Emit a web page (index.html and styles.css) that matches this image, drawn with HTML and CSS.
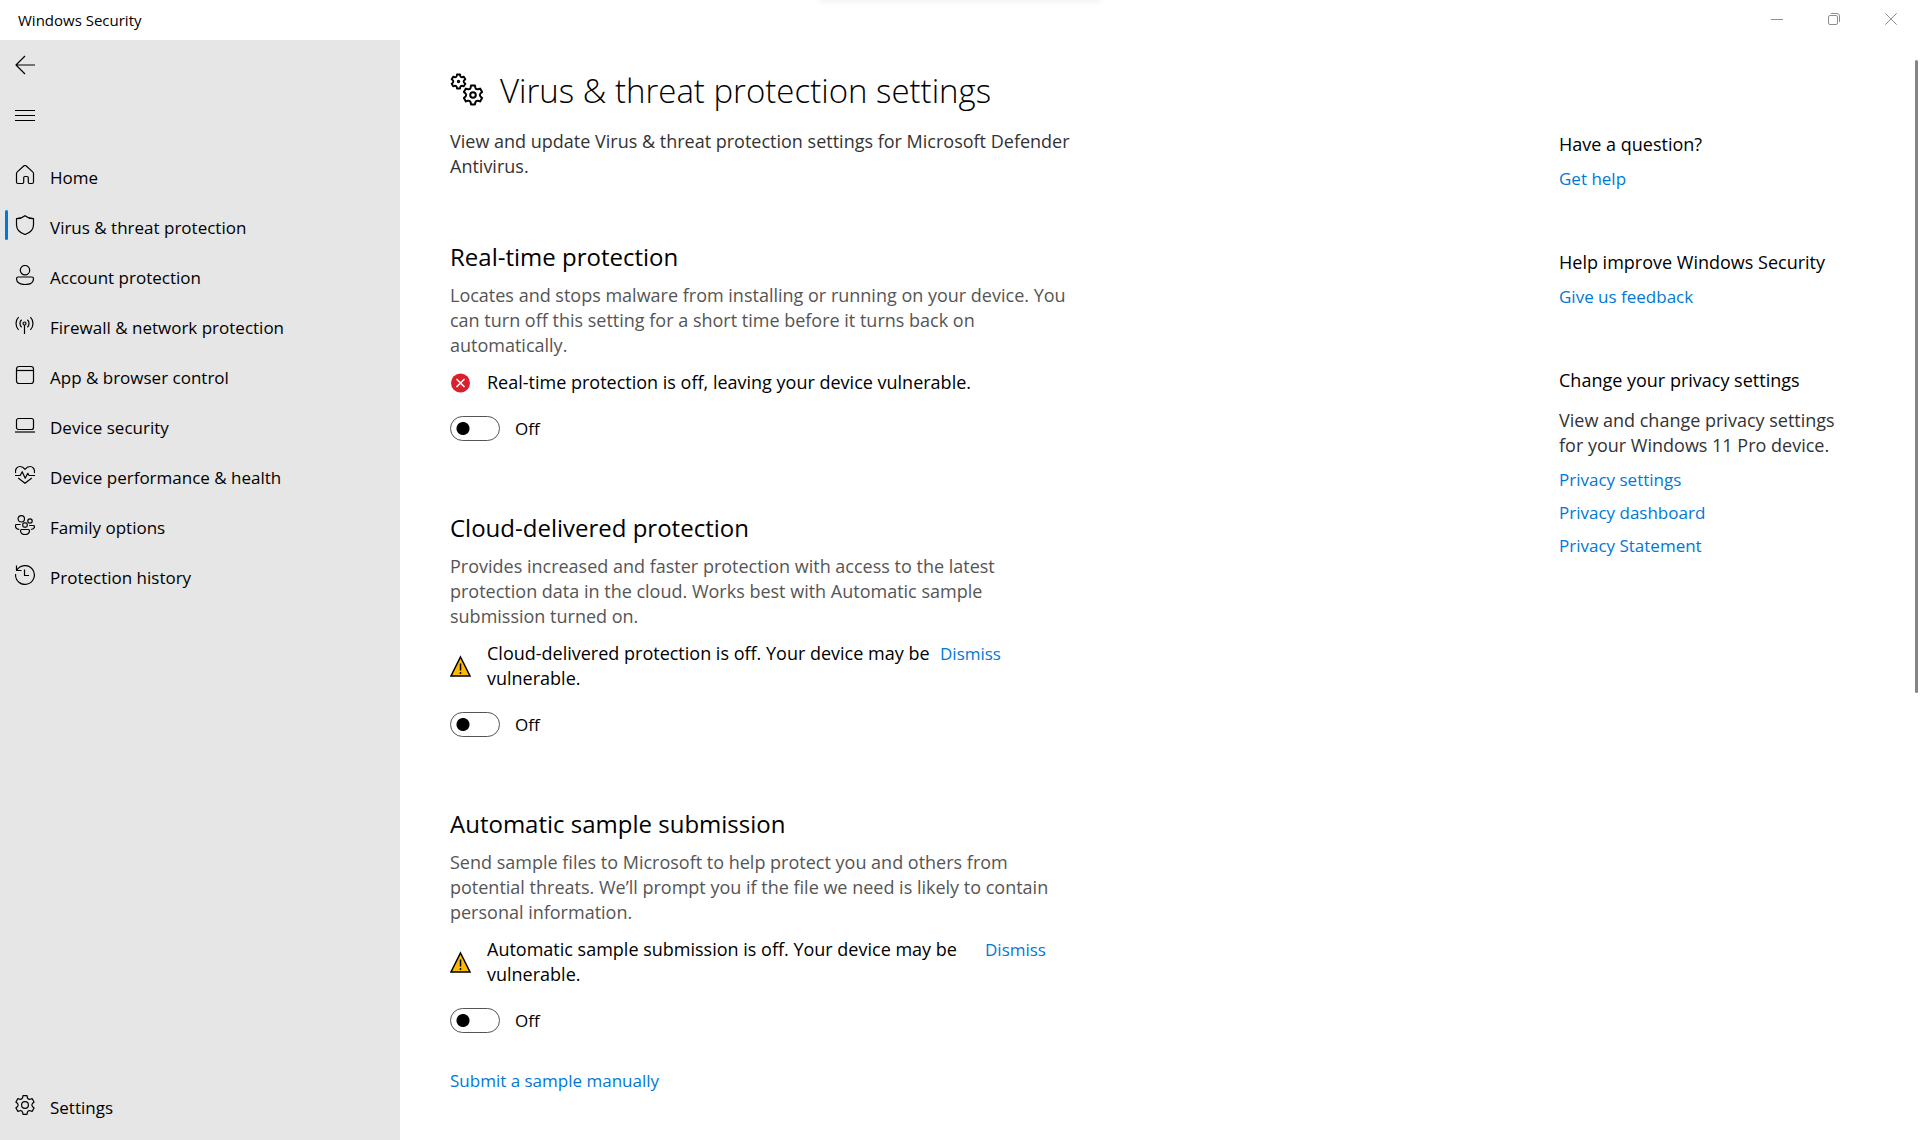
FILE: index.html
```html
<!DOCTYPE html>
<html lang="en">
<head>
    <meta charset="UTF-8">
    <meta name="viewport" content="width=device-width, initial-scale=1.0">
    <title>Windows Security</title>
    <link rel="stylesheet" href="styles.css">
</head>
<body>
    <header class="titlebar">
        <span class="app-name">Windows Security</span>
        <div class="window-buttons">
            <button type="button" aria-label="Minimize">
                <svg width="12" height="12" viewBox="0 0 12 12"><path d="M0 6.5h12"/></svg>
            </button>
            <button type="button" aria-label="Restore">
                <svg width="12" height="12" viewBox="0 0 12 12"><rect x=".5" y="2.5" width="9" height="9" rx="1.5"/><path d="M3 .5h6a2.500 2.500 0 0 1 2.500 2.500v6"/></svg>
            </button>
            <button type="button" aria-label="Close">
                <svg width="12" height="12" viewBox="0 0 12 12"><path d="M.3.3l11.400 11.400M11.700.3L.3 11.700"/></svg>
            </button>
        </div>
    </header>

    <div class="layout">
        <aside class="sidebar">
            <button type="button" class="icon-button" aria-label="Back">
                <svg class="icon" viewBox="0 0 20 20"><path d="M20 10H.8M10 1L1 10l9 9"/></svg>
            </button>
            <button type="button" class="icon-button" aria-label="Menu">
                <svg class="icon" viewBox="0 0 20 20"><path d="M0 5.500h20M0 10.500h20M0 15.500h20"/></svg>
            </button>

            <nav class="nav">
                <a href="#" class="nav-item">
                    <svg class="icon" viewBox="0 0 20 20"><path d="M1.500 8.500c0-.7.3-1.200.8-1.600l6.400-5.900a2 2 0 0 1 2.600 0l6.400 5.900c.5.400.8.900.8 1.600v8.500a1.500 1.500 0 0 1-1.500 1.500h-2.500a1.200 1.200 0 0 1-1.200-1.200v-4.600a1.200 1.200 0 0 0-1.200-1.200h-2.200a1.200 1.200 0 0 0-1.200 1.200v4.600a1.200 1.200 0 0 1-1.200 1.200H3a1.500 1.500 0 0 1-1.500-1.500z"/></svg>
                    <span>Home</span>
                </a>
                <a href="#" class="nav-item active">
                    <svg class="icon" viewBox="0 0 20 20"><path d="M10 .7c2.300 1.900 5 2.900 8.500 3v6c0 4.600-3 8-8.500 9.800-5.500-1.800-8.500-5.200-8.500-9.800v-6c3.500-.1 6.200-1.100 8.500-3z"/></svg>
                    <span>Virus &amp; threat protection</span>
                </a>
                <a href="#" class="nav-item">
                    <svg class="icon" viewBox="0 0 20 20"><circle cx="10" cy="5.200" r="4.700"/><path d="M3.200 12h13.600a1.700 1.700 0 0 1 1.700 1.700c0 3.800-3.600 5.800-8.500 5.800s-8.500-2-8.500-5.800A1.700 1.700 0 0 1 3.200 12z"/></svg>
                    <span>Account protection</span>
                </a>
                <a href="#" class="nav-item">
                    <svg class="icon" viewBox="0 0 20 20"><circle cx="9.500" cy="8.500" r="1.500"/><path d="M9.500 10v9M6.600 4.800a5 5 0 0 0 0 7.400M12.400 4.800a5 5 0 0 1 0 7.400M3.600 2.200a9 9 0 0 0 0 12.600M15.400 2.200a9 9 0 0 1 0 12.600"/></svg>
                    <span>Firewall &amp; network protection</span>
                </a>
                <a href="#" class="nav-item">
                    <svg class="icon" viewBox="0 0 20 20"><rect x="1.500" y="1.500" width="17" height="17" rx="2.500"/><path d="M1.500 5.500h17"/></svg>
                    <span>App &amp; browser control</span>
                </a>
                <a href="#" class="nav-item">
                    <svg class="icon" viewBox="0 0 20 20"><rect x="1.500" y="3.500" width="17" height="11" rx="2"/><path d="M0 17h20"/></svg>
                    <span>Device security</span>
                </a>
                <a href="#" class="nav-item">
                    <svg class="icon" viewBox="0 0 20 20"><path d="M.6 8.200C-.2 3.500 2.600 1.500 5 1.500c2.100 0 3.700 1 5 2.800 1.300-1.800 2.900-2.800 5-2.800 2.400 0 5.200 2 4.400 6.700M0 10.500h5.200l2-3.800 3 6.600 2.600-5 1.300 2.200H20M3.200 13l6.800 5.300 6.800-5.300"/></svg>
                    <span>Device performance &amp; health</span>
                </a>
                <a href="#" class="nav-item">
                    <svg class="icon" viewBox="0 0 20 20"><circle cx="6.300" cy="3.800" r="3.200"/><circle cx="15" cy="6" r="2.200"/><rect x="7.800" y="7.800" width="4.400" height="4.400" rx="1.500"/><path d="M5.600 9.500H1.500c-1 0-1 .5-1 1.500 0 2 1.500 3.200 3.800 3.500M14.200 10.500h4c1 0 1.300.5 1.300 1.200 0 1.500-1.300 2.500-3.500 2.800M6.500 14.500h7a1 1 0 0 1 1 1c0 2.500-2 4-4.500 4s-4.500-1.500-4.500-4a1 1 0 0 1 1-1z"/></svg>
                    <span>Family options</span>
                </a>
                <a href="#" class="nav-item">
                    <svg class="icon" viewBox="0 0 20 20"><path d="M1.500.5v5h5M1.800 5.300A9.400 9.400 0 1 1 .6 9M9.500 4.500v6h4.500"/></svg>
                    <span>Protection history</span>
                </a>
            </nav>

            <a href="#" class="nav-item nav-settings">
                <svg class="icon" viewBox="0 0 20 20"><use href="#gear"/><circle cx="10" cy="10" r="3.400"/></svg>
                <span>Settings</span>
            </a>
        </aside>

        <main class="content">
            <div class="settings">
                <div class="page-header">
                    <svg class="page-icon" width="34" height="34" viewBox="0 0 34 34">
                        <defs>
                            <path id="gear" d="M8 .6h4L12.400 2.800Q13.100 4.600 15 4.300L17.100 3.600l2 3.400L17.400 8.500Q16.200 10 17.400 11.500L19.100 13l-2 3.400L15 15.700Q13.100 15.400 12.400 17.200L12 19.400H8L7.600 17.200Q6.900 15.400 5 15.700L2.900 16.400.9 13 2.600 11.500Q3.800 10 2.600 8.500L.9 7l2-3.400L5 4.300Q6.900 4.600 7.600 2.800z"/>
                        </defs>
                        <svg class="gear-small" x="1" y="1" width="15" height="15" viewBox="0 0 20 20"><use href="#gear"/><circle cx="10" cy="10" r="1"/></svg>
                        <svg class="gear-large" x="13" y="12" width="20" height="20" viewBox="0 0 20 20"><use href="#gear"/><circle cx="10" cy="10" r="2.800"/></svg>
                    </svg>
                    <h1>Virus &amp; threat protection settings</h1>
                </div>
                <p class="intro">View and update Virus &amp; threat protection settings for Microsoft Defender Antivirus.</p>

                <section class="setting">
                    <h2 id="realtime">Real-time protection</h2>
                    <p class="description">Locates and stops malware from installing or running on your device. You can turn off this setting for a short time before it turns back on automatically.</p>
                    <div class="status">
                        <svg class="status-icon" width="21" height="20" viewBox="0 0 21 20"><circle cx="10.500" cy="10" r="9.500" fill="#da1f2d" stroke="none"/><path d="M6.500 6l8 8M14.500 6l-8 8" stroke="#fff" stroke-width="1.600"/></svg>
                        <p>Real-time protection is off, leaving your device vulnerable.</p>
                    </div>
                    <label class="toggle">
                        <input type="checkbox" role="switch" aria-describedby="realtime">
                        <span>Off</span>
                    </label>
                </section>

                <section class="setting">
                    <h2 id="cloud">Cloud-delivered protection</h2>
                    <p class="description">Provides increased and faster protection with access to the latest protection data in the cloud. Works best with Automatic sample submission turned on.</p>
                    <div class="status">
                        <svg class="status-icon" width="21" height="22" viewBox="0 0 21 22"><path d="M10.500 2L20 21H1z" fill="#fdb900" stroke="#000" stroke-width="1.500"/><path d="M10.500 8.500v7M10.500 17v2" stroke="#000" stroke-width="1.500"/></svg>
                        <p class="status-narrow">Cloud-delivered protection is off. Your device may be vulnerable.</p>
                        <a href="#">Dismiss</a>
                    </div>
                    <label class="toggle">
                        <input type="checkbox" role="switch" aria-describedby="cloud">
                        <span>Off</span>
                    </label>
                </section>

                <section class="setting">
                    <h2 id="samples">Automatic sample submission</h2>
                    <p class="description">Send sample files to Microsoft to help protect you and others from potential threats. We’ll prompt you if the file we need is likely to contain personal information.</p>
                    <div class="status">
                        <svg class="status-icon" width="21" height="22" viewBox="0 0 21 22"><path d="M10.500 2L20 21H1z" fill="#fdb900" stroke="#000" stroke-width="1.500"/><path d="M10.500 8.500v7M10.500 17v2" stroke="#000" stroke-width="1.500"/></svg>
                        <p class="status-wide">Automatic sample submission is off. Your device may be vulnerable.</p>
                        <a href="#">Dismiss</a>
                    </div>
                    <label class="toggle">
                        <input type="checkbox" role="switch" aria-describedby="samples">
                        <span>Off</span>
                    </label>
                    <a href="#" class="submit-link">Submit a sample manually</a>
                </section>
            </div>

            <aside class="help">
                <section>
                    <h3>Have a question?</h3>
                    <a href="#">Get help</a>
                </section>
                <section>
                    <h3>Help improve Windows Security</h3>
                    <a href="#">Give us feedback</a>
                </section>
                <section>
                    <h3>Change your privacy settings</h3>
                    <p>View and change privacy settings for your Windows 11 Pro device.</p>
                    <a href="#">Privacy settings</a>
                    <a href="#">Privacy dashboard</a>
                    <a href="#">Privacy Statement</a>
                </section>
            </aside>

            <div class="scroll-thumb"></div>
        </main>
    </div>
</body>
</html>
```

FILE: styles.css
```css
* {
    box-sizing: border-box;
}

body {
    margin: 0;
    min-height: 100vh;
    display: flex;
    flex-direction: column;
    font-family: 'Segoe UI', 'Open Sans', 'Noto Sans', sans-serif;
    font-size: 18px;
    line-height: 25px;
    color: #000;
    background: #fff;
}

h1, h2, h3, p {
    margin: 0;
    font-weight: 400;
}

a {
    font-size: 17px;
    color: #0078d7;
    text-decoration: none;
}

button {
    padding: 0;
    border: 0;
    background: none;
    color: inherit;
}

svg {
    display: block;
    flex-shrink: 0;
    fill: none;
    stroke: currentColor;
}

/* Title bar */
.titlebar {
    position: relative;
    display: flex;
    justify-content: space-between;
    height: 40px;
    padding: 0 1px 0 18px;
    font-size: 15px;
    line-height: 40px;
}

/* soft shadow at the top edge of the window */
.titlebar::after {
    content: '';
    position: absolute;
    top: 0;
    left: 50%;
    width: 280px;
    margin-left: -140px;
    box-shadow: 0 0 5px 1px rgba(0, 0, 0, 0.12);
}

.window-buttons {
    display: flex;
    color: #8f8f8f;
}

.window-buttons button {
    display: grid;
    place-items: center;
    width: 57px;
    height: 38px;
}

.layout {
    flex: 1;
    display: flex;
}

/* Sidebar */
.sidebar {
    display: flex;
    flex-direction: column;
    width: 400px;
    flex-shrink: 0;
    padding-bottom: 10px;
    background: #e6e6e6;
}

.icon {
    width: 20px;
    height: 20px;
    stroke-width: 1.2;
    stroke-linejoin: round;
}

.icon-button {
    display: flex;
    align-items: center;
    width: 50px;
    height: 50px;
    padding-left: 15px;
}

.nav {
    margin-top: 10px;
}

.nav-item {
    position: relative;
    display: flex;
    align-items: center;
    gap: 15px;
    height: 50px;
    padding-left: 15px;
    color: #000;
}

.nav-item span {
    padding-top: 4px;
}

.nav-item.active::before {
    content: '';
    position: absolute;
    left: 5px;
    top: 10px;
    width: 3px;
    height: 30px;
    border-radius: 2px;
    background: #0078d7;
}

.nav-settings {
    margin-top: auto;
}

/* Settings page */
.content {
    position: relative;
    flex: 1;
    display: flex;
    justify-content: space-between;
    padding: 28px 70px 40px 50px;
}

.settings {
    width: 622px;
}

.page-header {
    display: flex;
    gap: 16px;
    margin-bottom: 15px;
}

.page-icon {
    margin-top: 5px;
    stroke-linejoin: round;
}

.gear-small {
    overflow: visible;
    stroke-width: 2.5;
}

.gear-large {
    overflow: visible;
    stroke-width: 2;
}

h1 {
    font-size: 33px;
    font-weight: 300;
    line-height: 46px;
    white-space: nowrap;
}

.intro {
    margin-bottom: 61px;
    color: #333;
}

.setting {
    margin-bottom: 70px;
}

.setting:last-child {
    margin-bottom: 0;
}

h2 {
    margin-bottom: 9px;
    font-size: 24px;
    line-height: 34px;
}

.description {
    margin-bottom: 12px;
    color: #555;
}

.status {
    display: flex;
    margin-bottom: 21px;
}

.status-icon {
    align-self: center;
    margin-right: 16px;
}

.status-narrow {
    width: 443px;
}

.status-wide {
    width: 488px;
}

.status a {
    margin-left: 10px;
}

.toggle {
    display: flex;
    gap: 15px;
    width: max-content;
    font-size: 17px;
}

.toggle input {
    appearance: none;
    width: 50px;
    height: 25px;
    margin: 0;
    border: 1px solid #555;
    border-radius: 13px;
    background: radial-gradient(circle at 12px 50%, #000 6px, transparent 7px);
}

.toggle input:checked {
    background: radial-gradient(circle at 36px 50%, #0078d7 6px, transparent 7px);
}

.submit-link {
    display: block;
    width: max-content;
    margin-top: 35px;
}

/* Help column */
.help {
    width: 291px;
    padding-top: 64px;
}

.help section {
    margin-bottom: 59px;
}

.help h3 {
    margin-bottom: 9px;
    font-size: 18px;
}

.help p {
    margin-top: 15px;
    margin-bottom: 9px;
    color: #333;
}

.help a {
    display: block;
    width: max-content;
    margin-bottom: 8px;
}

.scroll-thumb {
    position: absolute;
    top: 20px;
    right: 2px;
    width: 3px;
    height: 633px;
    border-radius: 2px;
    background: #858585;
}
```
